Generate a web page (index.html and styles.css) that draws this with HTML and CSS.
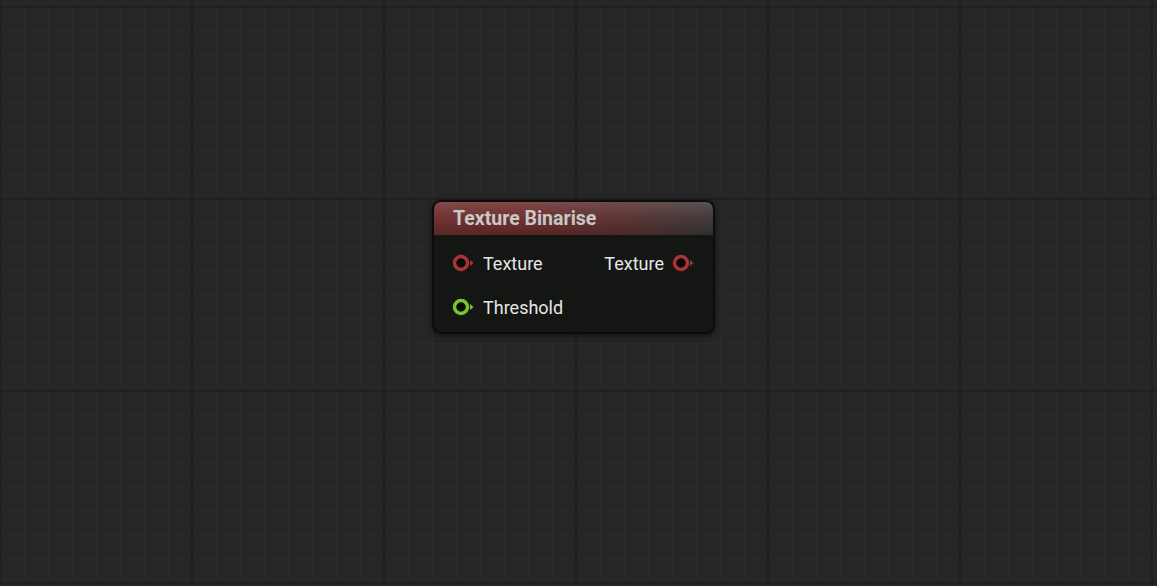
FILE: index.html
```html
<!DOCTYPE html>
<html lang="en">
<head>
    <meta charset="UTF-8">
    <meta name="viewport" content="width=device-width, initial-scale=1.0">
    <title>Material Graph</title>
    <link rel="stylesheet" href="styles.css">
</head>
<body>
    <div class="graph">
        <!-- node sits at its graph coordinates -->
        <div class="node">
            <div class="node-header">Texture Binarise</div>
            <div class="node-body">
                <div class="pin-row">
                    <div class="pin">
                        <svg class="pin-icon texture" width="23" height="18" viewBox="0 0 23 18">
                            <circle cx="9" cy="9" r="6.5" />
                            <path d="M18 6 L21.5 9 L18 12 Z" />
                        </svg>
                        <span>Texture</span>
                    </div>
                    <div class="pin">
                        <span>Texture</span>
                        <svg class="pin-icon texture" width="23" height="18" viewBox="0 0 23 18">
                            <circle cx="9" cy="9" r="6.5" />
                            <path d="M18 6 L21.5 9 L18 12 Z" />
                        </svg>
                    </div>
                </div>
                <div class="pin-row">
                    <div class="pin">
                        <svg class="pin-icon scalar" width="23" height="18" viewBox="0 0 23 18">
                            <circle cx="9" cy="9" r="6.5" />
                            <path d="M18 6 L21.5 9 L18 12 Z" />
                        </svg>
                        <span>Threshold</span>
                    </div>
                </div>
            </div>
        </div>
    </div>
</body>
</html>
```

FILE: styles.css
```css
body {
    margin: 0;
    padding: 0;
    overflow: hidden;
    background: #262626;
    font-family: Roboto, "Liberation Sans", sans-serif;
}

.graph {
    position: relative;
    width: 100vw;
    height: 100vh;
    background-color: #262626;
    background-image:
        linear-gradient(to right, #1f1f1f 0, #1f1f1f 2px, transparent 2px),
        linear-gradient(to bottom, #1f1f1f 0, #1f1f1f 2px, transparent 2px),
        linear-gradient(to right, #2b2b2b 0, #2b2b2b 1px, transparent 1px),
        linear-gradient(to bottom, #2b2b2b 0, #2b2b2b 1px, transparent 1px);
    background-size: 192px 192px, 192px 192px, 24px 24px, 24px 24px;
    background-position: -1px 6px, -1px 6px, 0 7px, 0 7px;
}

.node {
    position: absolute;
    left: 432px;
    top: 200px;
    width: 279px;
    height: 130px;
    padding: 2px;
    background: #0c0c0c;
    border-radius: 9px;
    box-shadow: 0 2px 6px rgba(0, 0, 0, 0.55);
    display: flex;
    flex-direction: column;
}

.node-header {
    height: 33px;
    padding-left: 19px;
    display: flex;
    align-items: center;
    border-radius: 7px 7px 0 0;
    color: #c8c8c8;
    font-size: 19.5px;
    font-weight: bold;
    background:
        linear-gradient(to bottom, rgba(255, 255, 255, 0.14) 0, rgba(255, 255, 255, 0.04) 45%, rgba(0, 0, 0, 0.15) 100%),
        linear-gradient(to right, #6d2c2c 0, #6a2a2a 30%, #5a2e2e 65%, #3b3535 100%);
}

.node-body {
    flex: 1;
    background: #141614;
    border-radius: 0 0 7px 7px;
    padding: 16px 18px 0 18px;
    display: flex;
    flex-direction: column;
    gap: 20px;
}

.pin-row {
    display: flex;
    justify-content: space-between;
    align-items: center;
    height: 24px;
}

.pin {
    display: flex;
    align-items: center;
    gap: 8px;
    color: #e6e6e6;
    font-size: 18px;
}

.pin-icon circle {
    fill: #080808;
    stroke-width: 3.5;
}

.pin-icon.texture circle {
    stroke: #a83434;
}

.pin-icon.texture path {
    fill: #a83434;
}

.pin-icon.scalar circle {
    stroke: #7cc42a;
}

.pin-icon.scalar path {
    fill: #7cc42a;
}
```
